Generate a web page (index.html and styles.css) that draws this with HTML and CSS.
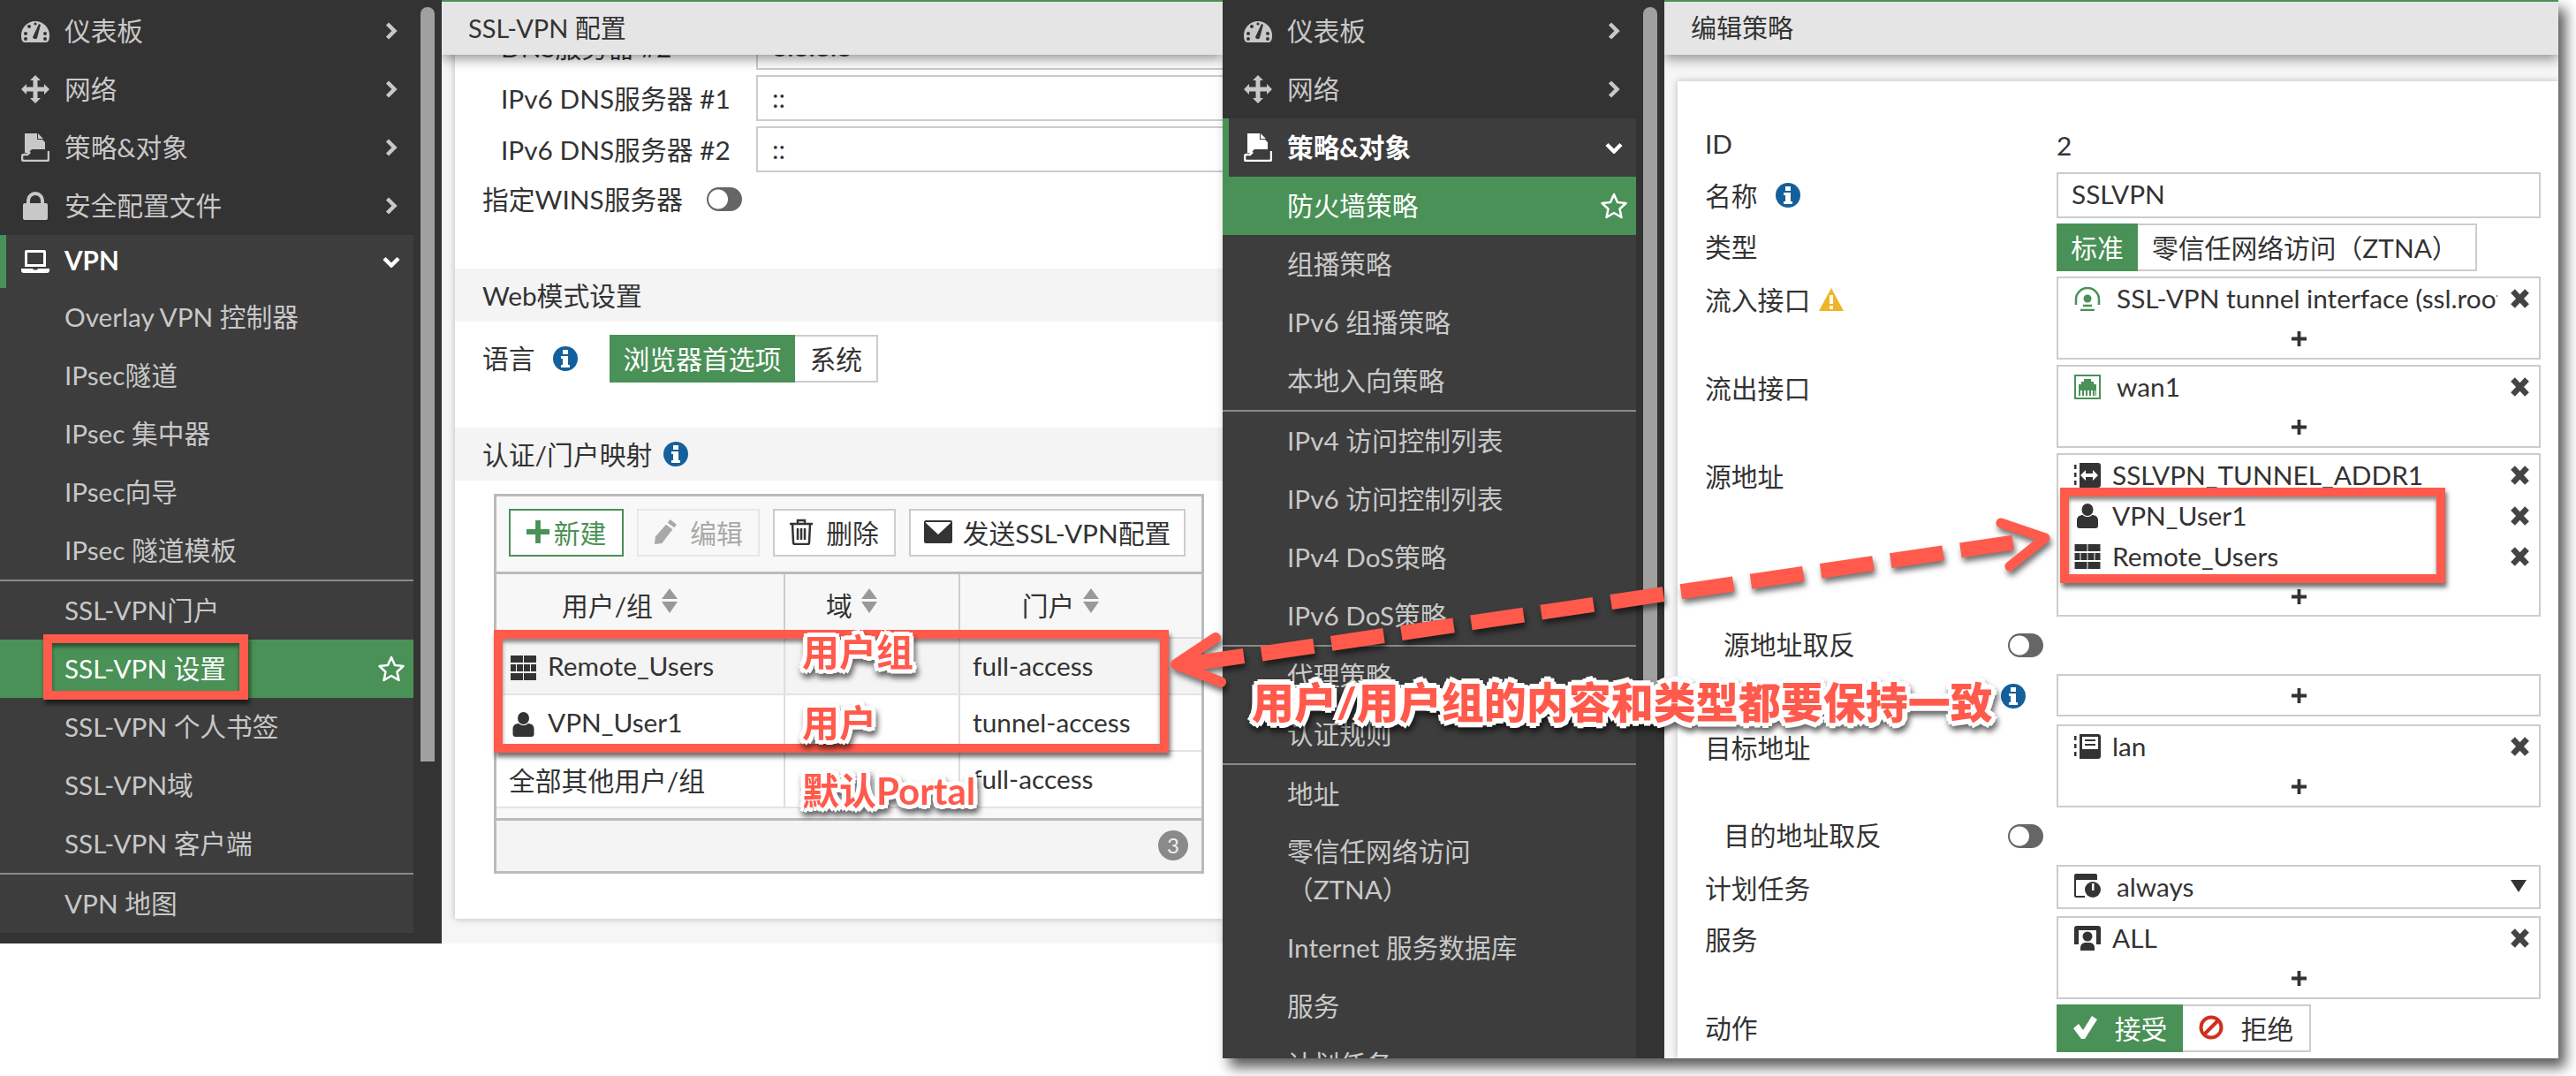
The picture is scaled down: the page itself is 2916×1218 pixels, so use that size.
FILE: index.html
```html
<!DOCTYPE html>
<html lang="zh-CN">
<head>
  <meta charset="UTF-8">
  <title>SSL-VPN 配置与编辑策略</title>
  <link rel="stylesheet" href="styles.css">
</head>
<body>

  <!-- icon sprites -->
  <svg class="defs">
    <symbol id="i-dash" viewBox="0 0 32 26"><path fill="currentColor" d="M4 26Q0 26 0 18A16 16 0 0 1 32 18Q32 26 28 26Z"/><g fill="#333"><circle cx="5" cy="16" r="2"/><circle cx="9" cy="8" r="2"/><circle cx="16" cy="5" r="1.6"/><circle cx="27" cy="16" r="2"/><circle cx="5" cy="22" r="2"/><circle cx="27" cy="22" r="2"/><path d="M13 20L20 5l2 1-4 15a2.800 2.800 0 0 1-5-1z"/></g></symbol>
    <symbol id="i-move" viewBox="0 0 32 32"><path fill="currentColor" d="M16 0l6 6h-3.500v7.500H26V10l6 6-6 6v-3.500h-7.500V26H22l-6 6-6-6h3.500v-7.500H6V22l-6-6 6-6v3.500h7.500V6H10z"/></symbol>
    <symbol id="i-policy" viewBox="0 0 32 32"><path fill="currentColor" d="M4 0h14v7h6l3 3v8H12l-4 4H4zM19 0l6 6h-6z"/><path fill="none" stroke="currentColor" stroke-width="2.500" d="M10 21l-3 3H3q-2 0-2 2v3q0 2 2 2h26q2 0 2-2v-9"/></symbol>
    <symbol id="i-lock" viewBox="0 0 28 32"><path fill="currentColor" d="M2 13h2V10a10 10 0 0 1 20 0v3h2q2 0 2 2v15q0 2-2 2H2q-2 0-2-2V15q0-2 2-2zm6 0h12V10a6 6 0 0 0-12 0z"/></symbol>
    <symbol id="i-laptop" viewBox="0 0 32 26"><path fill="currentColor" d="M6 0h20q2 0 2 2v17H4V2q0-2 2-2zm1 3v13h18V3zM0 21h13l1 1.500h4L19 21h13v2q0 3-3 3H3q-3 0-3-3z"/></symbol>
    <symbol id="i-chev-r" viewBox="0 0 14 20"><path fill="none" stroke="currentColor" stroke-width="4.500" d="M2.500 2l8 8-8 8"/></symbol>
    <symbol id="i-chev-d" viewBox="0 0 20 13"><path fill="none" stroke="currentColor" stroke-width="4.500" d="M2 2.500l8 8 8-8"/></symbol>
    <symbol id="i-star" viewBox="0 0 30 30"><path fill="none" stroke="currentColor" stroke-width="2.500" stroke-linejoin="round" d="M15 2l4 9 9.500 1-7 6.500 2 9.500-8.500-5-8.500 5 2-9.500-7-6.500 9.500-1z"/></symbol>
    <symbol id="i-info" viewBox="0 0 28 28"><circle cx="14" cy="14" r="14" fill="#14609c"/><path fill="#fff" d="M11 4h6v5h-6zM9 11h8v10h2v3H9v-3h2v-7H9z"/></symbol>
    <symbol id="i-warn" viewBox="0 0 28 26"><path fill="#f0b429" d="M14 0l14 26H0z"/><path fill="#fff" d="M12 8h4v10h-4zM12 20h4v4h-4z"/></symbol>
    <symbol id="i-group" viewBox="0 0 29 28"><path fill="currentColor" d="M0 0h14v8H0zM15 0h14v8H15zM0 10h6v8H0zM7 10h7v8H7zM15 10h7v8h-7zM23 10h6v8h-6zM0 20h14v8H0zM15 20h14v8H15z"/></symbol>
    <symbol id="i-user" viewBox="0 0 24 28"><ellipse fill="currentColor" cx="12" cy="7" rx="6.500" ry="7"/><path fill="currentColor" d="M0 25v-6c0-4 3-6 7-6 1 1.500 3 2 5 2s4-.5 5-2c4 0 7 2 7 6v6q0 3-3 3H3q-3 0-3-3z"/></symbol>
    <symbol id="i-tunnel" viewBox="0 0 30 28"><path fill="none" stroke="#4a9157" stroke-width="2.500" d="M2 21V15a13 13 0 0 1 26 0v6"/><circle cx="15" cy="14" r="4.500" fill="#4a9157"/><path fill="none" stroke="#4a9157" stroke-width="2.500" d="M10 22h10M7 27h16"/></symbol>
    <symbol id="i-port" viewBox="0 0 30 28"><rect x="1" y="1" width="28" height="26" fill="#fff" stroke="#4a9157" stroke-width="2"/><path fill="#4a9157" d="M11 5h8v3h3v3h3v7H5v-7h3V8h3zM5 18h2v6H5zM9 18h2v6H9zM13 18h2v6h-2zM17 18h2v6h-2zM21 18h2v6h-2z"/><path fill="#4a9157" d="M24 18h1v6h-1z"/></symbol>
    <symbol id="i-range" viewBox="0 0 30 28"><path fill="#333" d="M6 0h21q3 0 3 3v22q0 3-3 3H6zM0 2h2.500v5H0zM0 11h2.500v5H0zM0 20h2.500v5H0z"/><path fill="#fff" d="M7 14l6-6v4h8V8l6 6-6 6v-4h-8v4z"/></symbol>
    <symbol id="i-addr" viewBox="0 0 30 28"><path fill="#333" d="M6 0h21q3 0 3 3v22q0 3-3 3H6zM0 2h2.500v5H0zM0 11h2.500v5H0zM0 20h2.500v5H0z"/><path fill="#fff" d="M9 3h18v14H9z"/><path fill="#333" d="M12 6h12v2H12zM12 11h12v2H12z"/></symbol>
    <symbol id="i-sched" viewBox="0 0 30 28"><path fill="#333" d="M2 0h22q2 0 2 2v5H0V2q0-2 2-2zM0 7h2v18h10v2H2q-2 0-2-2z"/><circle cx="21" cy="18" r="9" fill="#333"/><path fill="#fff" d="M20 11h2.500v8H20z"/></symbol>
    <symbol id="i-service" viewBox="0 0 30 28"><path fill="#333" d="M3 0h24q3 0 3 3v18h-5V5H5v16H0V3q0-3 3-3z"/><circle cx="15" cy="12" r="5.500" fill="#333"/><path fill="#333" d="M7 28v-3q0-5 5-6h6q5 1 5 6v3z"/></symbol>
    <symbol id="i-x" viewBox="0 0 23 22"><path fill="none" stroke="currentColor" stroke-width="6.500" d="M3.500 2.500l16 17M19.500 2.500l-16 17"/></symbol>
    <symbol id="i-plus" viewBox="0 0 18 18"><path fill="currentColor" d="M7 0h4v7h7v4h-7v7H7v-7H0V7h7z"/></symbol>
    <symbol id="i-check" viewBox="0 0 28 28"><path fill="currentColor" d="M1 15l6-5 5 7L22 1l6 4-14 22h-4z"/></symbol>
    <symbol id="i-ban" viewBox="0 0 28 28"><circle cx="14" cy="14" r="11.500" fill="none" stroke="#d0301f" stroke-width="4"/><path stroke="#d0301f" stroke-width="4" d="M22 6L6 22"/></symbol>
    <symbol id="i-sort" viewBox="0 0 18 28"><path fill="#999" d="M9 0l9 12H0zM0 15h18l-9 13z"/></symbol>
    <symbol id="i-pencil" viewBox="0 0 28 30"><path fill="currentColor" d="M20 0l8 6-3 4-8-6zM15 6l8 6-13 17-9 1 1-9z"/></symbol>
    <symbol id="i-trash" viewBox="0 0 26 30"><path fill="none" stroke="currentColor" stroke-width="2.500" d="M0 6h26M9 6V2h8v4M3 6l1 21q0 2 2 2h14q2 0 2-2l1-21M9 11v13M13 11v13M17 11v13"/></symbol>
    <symbol id="i-mail" viewBox="0 0 32 26"><path fill="currentColor" d="M2 0h28q2 0 2 2v22q0 2-2 2H2q-2 0-2-2V2q0-2 2-2zm0 3l14 13L30 3v-1H2z"/></symbol>
  </svg>

  <!-- SSL-VPN settings window -->
  <section class="win win-left">
    <nav class="side">
      <div class="side-list">
        <div class="nav-item"><svg class="nav-icon nav-icon-dash"><use href="#i-dash"/></svg>仪表板<svg class="chev"><use href="#i-chev-r"/></svg></div>
        <div class="nav-item"><svg class="nav-icon"><use href="#i-move"/></svg>网络<svg class="chev"><use href="#i-chev-r"/></svg></div>
        <div class="nav-item"><svg class="nav-icon"><use href="#i-policy"/></svg>策略&amp;对象<svg class="chev"><use href="#i-chev-r"/></svg></div>
        <div class="nav-item"><svg class="nav-icon"><use href="#i-lock"/></svg>安全配置文件<svg class="chev"><use href="#i-chev-r"/></svg></div>
        <div class="nav-group">
          <div class="nav-item nav-open nav-short"><svg class="nav-icon nav-icon-dash"><use href="#i-laptop"/></svg>VPN<svg class="chev chev-d"><use href="#i-chev-d"/></svg></div>
          <div class="nav-sub">Overlay VPN 控制器</div>
          <div class="nav-sub">IPsec隧道</div>
          <div class="nav-sub">IPsec 集中器</div>
          <div class="nav-sub">IPsec向导</div>
          <div class="nav-sub">IPsec 隧道模板</div>
          <div class="nav-line"></div>
          <div class="nav-sub">SSL-VPN门户</div>
          <div class="nav-sub nav-active">SSL-VPN 设置<svg class="star"><use href="#i-star"/></svg></div>
          <div class="nav-sub">SSL-VPN 个人书签</div>
          <div class="nav-sub">SSL-VPN域</div>
          <div class="nav-sub">SSL-VPN 客户端</div>
          <div class="nav-line"></div>
          <div class="nav-sub">VPN 地图</div>
        </div>
      </div>
      <div class="scroll scroll-left"></div>
    </nav>

    <main class="main">
      <header class="title-bar">SSL-VPN 配置</header>
      <div class="card card-left">
        <div class="f-row f-first"><label class="f-label">DNS服务器 #2</label><div class="f-input">8.8.8.8</div></div>
        <div class="f-row"><label class="f-label">IPv6 DNS服务器 #1</label><div class="f-input">::</div></div>
        <div class="f-row"><label class="f-label">IPv6 DNS服务器 #2</label><div class="f-input">::</div></div>
        <div class="f-switch"><span class="f-switch-text">指定WINS服务器</span><span class="toggle"></span></div>

        <div class="band band-web">Web模式设置</div>
        <div class="lang-row">
          <span class="lang-label">语言</span><svg class="info"><use href="#i-info"/></svg>
          <div class="seg">
            <span class="seg-btn seg-on">浏览器首选项</span><span class="seg-btn">系统</span>
          </div>
        </div>
        <div class="band band-map">认证/门户映射<svg class="info"><use href="#i-info"/></svg></div>

        <div class="grid-box">
          <div class="toolbar">
            <button class="tool tool-new"><svg class="tool-plus"><use href="#i-plus"/></svg>新建</button>
            <button class="tool tool-off"><svg class="tool-icon"><use href="#i-pencil"/></svg>编辑</button>
            <button class="tool"><svg class="tool-icon"><use href="#i-trash"/></svg>删除</button>
            <button class="tool tool-send"><svg class="tool-mail"><use href="#i-mail"/></svg>发送SSL-VPN配置</button>
          </div>
          <table class="grid">
            <colgroup><col class="col-a"><col class="col-b"><col></colgroup>
            <thead>
              <tr>
                <th><span class="th-in">用户/组<svg class="sort"><use href="#i-sort"/></svg></span></th>
                <th><span class="th-in">域<svg class="sort"><use href="#i-sort"/></svg></span></th>
                <th><span class="th-in">门户<svg class="sort"><use href="#i-sort"/></svg></span></th>
              </tr>
            </thead>
            <tbody>
              <tr class="row-grey"><td class="td-name"><svg class="grid-icon"><use href="#i-group"/></svg>Remote_Users</td><td></td><td>full-access</td></tr>
              <tr><td class="td-name"><svg class="grid-icon"><use href="#i-user"/></svg>VPN_User1</td><td></td><td>tunnel-access</td></tr>
              <tr><td>全部其他用户/组</td><td></td><td>full-access</td></tr>
            </tbody>
          </table>
          <div class="grid-foot"><span class="count">3</span></div>
        </div>
      </div>
    </main>
  </section>

  <!-- edit policy window -->
  <section class="win win-right">
    <nav class="side">
      <div class="side-list">
        <div class="nav-item"><svg class="nav-icon nav-icon-dash"><use href="#i-dash"/></svg>仪表板<svg class="chev"><use href="#i-chev-r"/></svg></div>
        <div class="nav-item"><svg class="nav-icon"><use href="#i-move"/></svg>网络<svg class="chev"><use href="#i-chev-r"/></svg></div>
        <div class="nav-group">
          <div class="nav-item nav-open"><svg class="nav-icon"><use href="#i-policy"/></svg>策略&amp;对象<svg class="chev chev-d"><use href="#i-chev-d"/></svg></div>
          <div class="nav-sub nav-active">防火墙策略<svg class="star"><use href="#i-star"/></svg></div>
          <div class="nav-sub">组播策略</div>
          <div class="nav-sub">IPv6 组播策略</div>
          <div class="nav-sub">本地入向策略</div>
          <div class="nav-line"></div>
          <div class="nav-sub">IPv4 访问控制列表</div>
          <div class="nav-sub">IPv6 访问控制列表</div>
          <div class="nav-sub">IPv4 DoS策略</div>
          <div class="nav-sub">IPv6 DoS策略</div>
          <div class="nav-line"></div>
          <div class="nav-sub">代理策略</div>
          <div class="nav-sub">认证规则</div>
          <div class="nav-line"></div>
          <div class="nav-sub">地址</div>
          <div class="nav-sub nav-two">零信任网络访问<br>（ZTNA）</div>
          <div class="nav-sub">Internet 服务数据库</div>
          <div class="nav-sub">服务</div>
          <div class="nav-sub">计划任务</div>
        </div>
      </div>
      <div class="scroll scroll-right"></div>
    </nav>

    <main class="main">
      <header class="title-bar title-right">编辑策略</header>
      <div class="card card-right">
        <div class="p-row p-id"><span class="p-label">ID</span><span class="p-value">2</span></div>
        <div class="p-row"><span class="p-label">名称<svg class="info info-p"><use href="#i-info"/></svg></span><div class="p-input">SSLVPN</div></div>
        <div class="p-row"><span class="p-label">类型</span>
          <div class="seg seg-p"><span class="seg-btn seg-on seg-std">标准</span><span class="seg-btn seg-ztna">零信任网络访问（ZTNA）</span></div>
        </div>
        <div class="p-row"><span class="p-label">流入接口<svg class="warn"><use href="#i-warn"/></svg></span>
          <div class="box">
            <div class="item"><svg class="item-icon"><use href="#i-tunnel"/></svg><span class="item-text">SSL-VPN tunnel interface (ssl.root)</span><svg class="x"><use href="#i-x"/></svg></div>
            <div class="add"><svg class="plus"><use href="#i-plus"/></svg></div>
          </div>
        </div>
        <div class="p-row"><span class="p-label">流出接口</span>
          <div class="box">
            <div class="item"><svg class="item-icon"><use href="#i-port"/></svg><span class="item-text">wan1</span><svg class="x"><use href="#i-x"/></svg></div>
            <div class="add"><svg class="plus"><use href="#i-plus"/></svg></div>
          </div>
        </div>
        <div class="p-row"><span class="p-label">源地址</span>
          <div class="box box-src">
            <div class="item item-near"><svg class="item-icon"><use href="#i-range"/></svg><span class="item-text">SSLVPN_TUNNEL_ADDR1</span><svg class="x"><use href="#i-x"/></svg></div>
            <div class="item item-near"><svg class="item-icon item-user"><use href="#i-user"/></svg><span class="item-text">VPN_User1</span><svg class="x"><use href="#i-x"/></svg></div>
            <div class="item item-near"><svg class="item-icon"><use href="#i-group"/></svg><span class="item-text">Remote_Users</span><svg class="x"><use href="#i-x"/></svg></div>
            <div class="add"><svg class="plus"><use href="#i-plus"/></svg></div>
          </div>
        </div>
        <div class="p-switch"><span class="p-sub">源地址取反</span><span class="toggle"></span></div>
        <div class="p-row p-gap"><span class="p-label p-label-end"><svg class="info"><use href="#i-info"/></svg></span>
          <div class="box box-empty"><div class="add add-only"><svg class="plus"><use href="#i-plus"/></svg></div></div>
        </div>
        <div class="p-row"><span class="p-label">目标地址</span>
          <div class="box">
            <div class="item item-near"><svg class="item-icon"><use href="#i-addr"/></svg><span class="item-text">lan</span><svg class="x"><use href="#i-x"/></svg></div>
            <div class="add"><svg class="plus"><use href="#i-plus"/></svg></div>
          </div>
        </div>
        <div class="p-switch"><span class="p-sub">目的地址取反</span><span class="toggle"></span></div>
        <div class="p-row"><span class="p-label">计划任务</span>
          <div class="p-select"><svg class="item-icon"><use href="#i-sched"/></svg><span class="item-text">always</span><span class="caret"></span></div>
        </div>
        <div class="p-row"><span class="p-label">服务</span>
          <div class="box">
            <div class="item item-near"><svg class="item-icon"><use href="#i-service"/></svg><span class="item-text">ALL</span><svg class="x"><use href="#i-x"/></svg></div>
            <div class="add"><svg class="plus"><use href="#i-plus"/></svg></div>
          </div>
        </div>
        <div class="p-row"><span class="p-label">动作</span>
          <div class="seg seg-p">
            <span class="seg-btn seg-on seg-act"><svg class="act-icon"><use href="#i-check"/></svg>接受</span><span class="seg-btn seg-act seg-deny"><svg class="act-icon"><use href="#i-ban"/></svg>拒绝</span>
          </div>
        </div>
      </div>
    </main>
  </section>

  <!-- annotations drawn over the two windows -->
  <div class="mark mark-menu"></div>
  <div class="mark mark-table"></div>
  <div class="mark mark-source"></div>

  <svg class="arrows" viewBox="0 0 2916 1218">
    <path class="arrow-head" d="M1376 722L1331 752L1382 772"/>
    <path class="arrow-shaft" d="M1336 753L1408 742.500"/>
    <path class="arrow-dash" d="M1428 740L2280 614"/>
    <path class="arrow-head arrow-head-r" d="M2265 592L2315 609L2275 641"/>
  </svg>

  <div class="note note-group">用户组</div>
  <div class="note note-user">用户</div>
  <div class="note note-portal">默认Portal</div>
  <div class="note note-main">用户/用户组的内容和类型都要保持一致</div>

</body>
</html>
```

FILE: styles.css
```css
* {
  box-sizing: border-box;
}

body {
  margin: 0;
  width: 2916px;
  height: 1218px;
  position: relative;
  overflow: hidden;
  background: #fff;
  font-family: "Lato", "Noto Sans CJK SC", sans-serif;
  font-size: 29.8px;
  color: #333;
}

.defs {
  display: none;
}

/* windows */
.win {
  position: absolute;
  top: 0;
  display: flex;
  overflow: hidden;
}

.win-left {
  left: 0;
  width: 1384px;
  height: 1068px;
}

.win-right {
  left: 1384px;
  width: 1512px;
  height: 1198px;
  overflow: visible;
  box-shadow: 8px 10px 14px rgba(0, 0, 0, 0.65);
}

/* sidebar */
.side {
  width: 500px;
  flex: none;
  display: flex;
  align-items: flex-start;
  height: 100%;
  overflow: hidden;
  padding-top: 2px;
  background: #333;
  color: #c8c8c8;
  font-size: 29.7px;
}

.side-list {
  width: 468px;
  flex: none;
}

.scroll {
  width: 16px;
  margin: 6px 0 0 8px;
  background: #a0a0a0;
  border-radius: 8px 8px 0 0;
  flex: none;
}

.scroll-left {
  height: 854px;
}

.scroll-right {
  height: 784px;
}

.nav-item {
  display: flex;
  align-items: center;
  height: 66px;
  padding: 0 18px 3px 24px;
}

.nav-short {
  height: 60px;
}

.nav-icon {
  width: 32px;
  height: 32px;
  margin: 3px 17px 0 0;
  flex: none;
}

.nav-icon-dash {
  height: 26px;
}

.chev {
  width: 14px;
  height: 20px;
  margin: 3px 0 0 auto;
}

.chev-d {
  width: 20px;
  height: 13px;
  margin-right: -3px;
}

.nav-group {
  background: #3d3d3d;
}

.nav-open {
  color: #fff;
  font-weight: 700;
  border-left: 7px solid #4a9157;
  padding-left: 17px;
}

.nav-sub {
  display: flex;
  align-items: center;
  height: 66px;
  padding: 0 10px 3px 73px;
}

.nav-two {
  height: 108px;
  display: block;
  padding-top: 10px;
  line-height: 43px;
}

.nav-active {
  background: #4a9157;
  color: #fff;
}

.star {
  width: 30px;
  height: 30px;
  margin: 3px 0 0 auto;
}

.nav-line {
  height: 2px;
  background: #8a8a8a;
}

/* main area */
.main {
  flex: 1;
  min-width: 0;
  position: relative;
  background: #f6f6f6;
  overflow: hidden;
}

.title-bar {
  position: relative;
  z-index: 2;
  height: 62px;
  padding-left: 30px;
  line-height: 60px;
  font-size: 29px;
  background: #e5e5e5;
  border-top: 2px solid #4a9157;
  box-shadow: 0 4px 14px rgba(0, 0, 0, 0.45);
}

.title-right {
  margin-bottom: 30px;
}

.card {
  background: #fff;
  box-shadow: 0 0 8px rgba(0, 0, 0, 0.25);
}

.card-left {
  margin-left: 15px;
  padding-bottom: 51px;
}

.card-right {
  margin-left: 15px;
  height: 1106px;
  padding-top: 47px;
}

/* left form */
.f-row {
  display: flex;
  align-items: center;
  height: 52px;
  margin-bottom: 6px;
}

.f-first {
  margin-top: -35px;
}

.f-label {
  width: 341px;
  padding: 0 0 3px 52px;
  flex: none;
}

.f-input {
  flex: 1;
  height: 52px;
  margin-right: -10px;
  padding-left: 16px;
  line-height: 48px;
  border: 2px solid #ccc;
}

.f-switch {
  display: flex;
  align-items: center;
  height: 27px;
  margin-top: 17px;
  padding-left: 31px;
}

.f-switch-text {
  position: relative;
  top: -2px;
}

.toggle {
  width: 40px;
  height: 27px;
  flex: none;
  border-radius: 14px;
  background: #666;
  background-image: radial-gradient(circle at 13px 13.500px, #fff 10.500px, #666 11.500px);
}

.f-switch .toggle {
  margin-left: 27px;
}

.band {
  display: flex;
  align-items: center;
  height: 60px;
  padding: 0 0 3px 31px;
  background: #f4f4f4;
}

.band-web {
  margin-top: 65px;
}

.band-map {
  margin-top: 51px;
}

.band-map .info {
  margin: 3px 0 0 13px;
}

.info {
  width: 28px;
  height: 28px;
  flex: none;
}

.lang-row {
  display: flex;
  align-items: center;
  height: 54px;
  margin-top: 15px;
  padding-left: 31px;
}

.lang-label {
  position: relative;
  top: -2px;
}

.lang-row .info {
  margin-left: 20px;
}

.seg {
  display: flex;
  height: 54px;
}

.lang-row .seg {
  margin-left: 36px;
}

.seg-btn {
  display: flex;
  align-items: center;
  justify-content: center;
  border: 2px solid #ccc;
  border-left: 0;
  padding: 0 16px 3px;
}

.seg-on {
  background: #4a9157;
  border: 0;
  color: #fff;
}

/* table box */
.grid-box {
  width: 804px;
  height: 430px;
  margin: 15px 0 0 44px;
  border: 3px solid #bbb;
  background: #f8f8f8;
  display: flex;
  flex-direction: column;
}

.toolbar {
  display: flex;
  gap: 15px;
  padding: 14px;
  height: 85px;
}

.tool {
  display: flex;
  align-items: center;
  justify-content: center;
  height: 54px;
  width: 139px;
  padding: 0 0 3px;
  background: #fff;
  border: 2px solid #ccc;
  font: inherit;
  color: #333;
}

.tool-new {
  width: 130px;
  border-color: #4a9157;
  color: #4a9157;
}

.tool-off {
  border-color: #e8e8e8;
  color: #a8a8a8;
  background: #f8f8f8;
}

.tool-send {
  width: 313px;
}

.tool-plus {
  width: 26px;
  height: 26px;
  margin-right: 5px;
}

.tool-icon {
  width: 26px;
  height: 30px;
  margin-right: 15px;
}

.tool-mail {
  width: 32px;
  height: 26px;
  margin-right: 12px;
}

.grid {
  width: 100%;
  border-collapse: collapse;
  table-layout: fixed;
  background: #fff;
}

.col-a {
  width: 326px;
}

.col-b {
  width: 198px;
}

.grid th {
  height: 73px;
  font-weight: 400;
  background: #f7f7f7;
  border-top: 3px solid #bbb;
  border-left: 2px solid #ccc;
  border-bottom: 2px solid #ddd;
  padding: 0 46px 3px 0;
}

.grid th:first-child,
.grid td:first-child {
  border-left: 0;
}

.th-in {
  display: inline-flex;
  align-items: center;
}

.sort {
  width: 18px;
  height: 28px;
  margin-left: 10px;
  position: relative;
  top: -4px;
}

.grid td {
  height: 64px;
  padding: 0 0 0 14px;
  border-left: 2px solid #ddd;
  border-bottom: 2px solid #e4e4e4;
}

.row-grey td {
  background: #f4f4f4;
}

.td-name {
  white-space: nowrap;
}

.grid-icon {
  width: 29px;
  height: 28px;
  margin: 0 13px 0 2px;
  vertical-align: -5px;
}

.grid-foot {
  flex: 1;
  margin-top: 11px;
  border-top: 3px solid #bbb;
  background: #f4f4f4;
  display: flex;
  align-items: center;
  justify-content: flex-end;
  padding-right: 15px;
}

.count {
  width: 34px;
  height: 34px;
  border-radius: 50%;
  background: #8a8a8a;
  color: #eee;
  font-size: 24px;
  line-height: 34px;
  text-align: center;
}

/* right form */
.p-row {
  display: flex;
  align-items: flex-start;
  margin-bottom: 6px;
}

.p-id {
  height: 50px;
  align-items: center;
}

.p-label {
  display: flex;
  align-items: center;
  width: 429px;
  height: 52px;
  padding: 0 0 3px 31px;
  flex: none;
}

.p-label-end {
  justify-content: flex-end;
  padding-right: 35px;
}

.p-value {
  line-height: 47px;
}

.info-p {
  margin: 3px 0 0 20px;
}

.warn {
  width: 28px;
  height: 26px;
  margin: 3px 0 0 10px;
}

.p-input {
  width: 548px;
  height: 52px;
  padding-left: 15px;
  line-height: 46px;
  border: 2px solid #ccc;
}

.seg-std {
  width: 92px;
  padding: 0 0 3px;
}

.seg-ztna {
  width: 384px;
  padding: 0 0 3px 16px;
  justify-content: flex-start;
}

.seg-act {
  width: 143px;
  padding: 0 0 3px;
}

.seg-deny {
  width: 145px;
}

.act-icon {
  width: 28px;
  height: 28px;
  margin-right: 20px;
}

.box {
  width: 548px;
  padding-top: 1px;
  border: 2px solid #ccc;
}

.box-src {
  height: 185px;
}

.box-empty {
  padding-top: 0;
}

.item {
  display: flex;
  align-items: center;
  height: 46px;
  padding: 0 10px 3px 18px;
}

.item-icon {
  width: 30px;
  height: 28px;
  margin-right: 18px;
  flex: none;
}

.item-near .item-icon {
  margin-right: 13px;
}

.item-user {
  width: 24px;
  margin-left: 3px;
}

.item-near .item-user {
  margin-right: 16px;
}

.item-text {
  flex: 1;
  white-space: nowrap;
  overflow: hidden;
}

.x {
  width: 23px;
  height: 22px;
  margin-left: 14px;
  color: #444;
  flex: none;
}

.add {
  display: flex;
  align-items: center;
  justify-content: center;
  height: 43px;
}

.add-only {
  height: 44px;
}

.plus {
  width: 17px;
  height: 17px;
  color: #333;
}

.p-switch {
  display: flex;
  align-items: center;
  height: 26px;
  margin: 19px 0 20px;
}

.p-sub {
  width: 374px;
  padding-left: 52px;
  flex: none;
  position: relative;
  top: -2px;
}

.p-row.p-gap {
  margin-bottom: 5px;
}

.p-select {
  display: flex;
  align-items: center;
  width: 548px;
  height: 50px;
  padding: 0 12px 2px 18px;
  border: 2px solid #ccc;
}

.caret {
  width: 0;
  height: 0;
  border-style: solid;
  border-width: 14px 9px 0;
  border-color: #333 transparent transparent;
  margin-right: 2px;
}

/* annotations */
.mark {
  position: absolute;
  border: 10px solid #ff5a4c;
  box-shadow: 2px 5px 5px rgba(0, 0, 0, 0.55), inset 0 4px 4px rgba(0, 0, 0, 0.45);
}

.mark-menu {
  left: 49px;
  top: 718px;
  width: 232px;
  height: 74px;
}

.mark-table {
  left: 559px;
  top: 713px;
  width: 764px;
  height: 139px;
}

.mark-source {
  left: 2332px;
  top: 552px;
  width: 436px;
  height: 108px;
}

.arrows {
  position: absolute;
  left: 0;
  top: 0;
  width: 2916px;
  height: 1218px;
  fill: none;
  stroke: #ff5a4c;
  filter: drop-shadow(2px 5px 3px rgba(0, 0, 0, 0.55));
}

.arrow-head {
  stroke-width: 12;
  stroke-linecap: round;
  stroke-linejoin: round;
}

.arrow-head-r {
  stroke-width: 11;
}

.arrow-shaft {
  stroke-width: 17;
}

.arrow-dash {
  stroke-width: 17;
  stroke-dasharray: 60 20;
}

.note {
  position: absolute;
  white-space: nowrap;
  font-weight: 700;
  color: #ff5a4c;
  font-size: 42px;
  line-height: 1;
  text-shadow: 5px 0 0 #fff, -5px 0 0 #fff, 0 5px 0 #fff, 0 -5px 0 #fff, 4px 4px 0 #fff, -4px 4px 0 #fff, 4px -4px 0 #fff, -4px -4px 0 #fff;
  filter: drop-shadow(2px 5px 3px rgba(0, 0, 0, 0.6));
}

.note-group {
  left: 908px;
  top: 717px;
}

.note-user {
  left: 908px;
  top: 797px;
}

.note-portal {
  left: 908px;
  top: 874px;
}

.note-main {
  left: 1417px;
  top: 771px;
  font-size: 48px;
  font-weight: 900;
  text-shadow: 6px 0 0 #fff, -6px 0 0 #fff, 0 6px 0 #fff, 0 -6px 0 #fff, 4px 4px 0 #fff, -4px 4px 0 #fff, 4px -4px 0 #fff, -4px -4px 0 #fff;
}
```
